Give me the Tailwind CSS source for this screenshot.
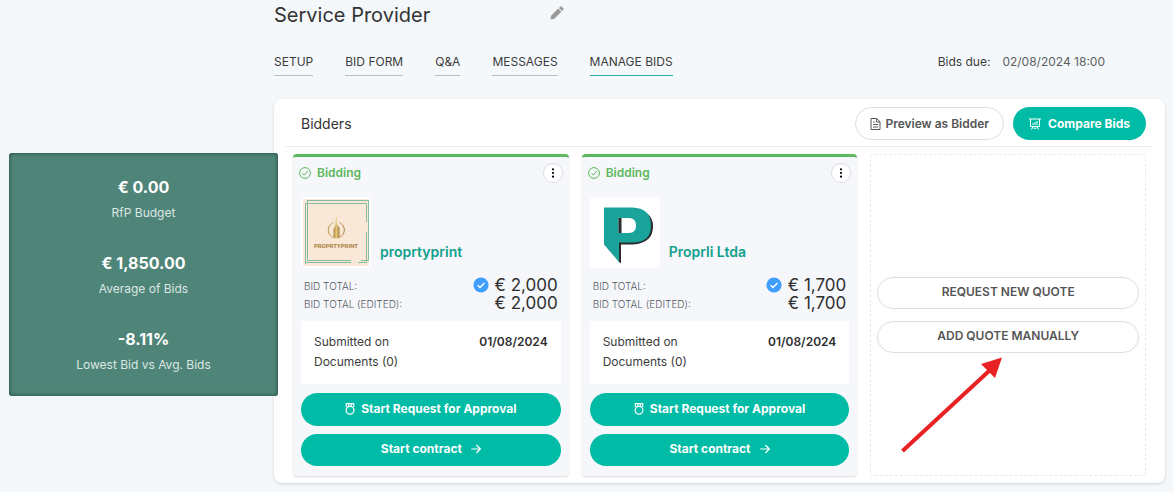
<!DOCTYPE html>
<html lang="en">
<head>
<meta charset="utf-8">
<meta name="viewport" content="width=device-width, initial-scale=1">
<title>Service Provider – Manage Bids</title>
<script src="https://cdn.jsdelivr.net/npm/@tailwindcss/browser@4"></script>
</head>
<body class="min-h-screen bg-[#f4f8fb] font-['Inter',sans-serif] text-[12px] text-[#3c3c3c]">
<svg class="hidden" aria-hidden="true">
  <symbol id="check-outline" viewBox="0 0 12 12"><circle cx="6" cy="6" r="5.4" fill="none" stroke="currentColor"/><path d="M3.4 6.2l1.9 1.8 3.5-3.9" fill="none" stroke="currentColor"/></symbol>
  <symbol id="check-solid" viewBox="0 0 16 16"><circle cx="8" cy="8" r="7.6" fill="#409eff"/><path d="M4.6 8.2l2.4 2.4 4.4-4.6" fill="none" stroke="#fff" stroke-width="1.4"/></symbol>
  <symbol id="dots" viewBox="0 0 4 10"><circle cx="2" cy="1.3" r="1.1"/><circle cx="2" cy="5" r="1.1"/><circle cx="2" cy="8.7" r="1.1"/></symbol>
  <symbol id="medal" viewBox="0 0 10 12"><g fill="none" stroke="currentColor" stroke-width="1.2"><path d="M1.300 3.900V.7h7.400v3.200M3.700.7v2.600M6.300.7v2.600"/><circle cx="5" cy="7.300" r="3.900"/></g></symbol>
  <symbol id="arrow-right" viewBox="0 0 10 10"><path d="M.3 5h9M5.300 1l4 4-4 4" fill="none" stroke="currentColor" stroke-width="1.200"/></symbol>
</svg>

<div class="flex">
  <aside class="relative z-10 w-[278px] shrink-0 pt-[153px] pl-[9px]">
    <dl class="flex flex-col gap-[31px] rounded-[3px] bg-[#4f8578] pt-[23px] pb-[23px] text-center shadow-[inset_0_0_4px_#1e4438]">
      <div class="flex flex-col-reverse gap-[7px]"><dt class="leading-[16px] text-[#dce7e4]">RfP Budget</dt><dd class="text-[16px] leading-[22px] font-bold text-white">€ 0.00</dd></div>
      <div class="flex flex-col-reverse gap-[7px]"><dt class="leading-[16px] text-[#dce7e4]">Average of Bids</dt><dd class="text-[16px] leading-[22px] font-bold text-white">€ 1,850.00</dd></div>
      <div class="flex flex-col-reverse gap-[7px]"><dt class="leading-[16px] text-[#dce7e4]">Lowest Bid vs Avg. Bids</dt><dd class="text-[16px] leading-[22px] font-bold text-white">-8.11%</dd></div>
    </dl>
  </aside>

  <main class="-ml-1 min-w-0 flex-1 pr-2">
    <div class="flex h-[30px] items-center gap-[120px]">
      <h1 class="text-[20px] leading-[30px] text-[#333]">Service Provider</h1>
      <button type="button" aria-label="Edit name" class="mb-1 text-[#9b9b9b]">
        <svg class="size-[14px]" viewBox="0 0 14 14" fill="currentColor"><path d="M.4 13.600l.8-4L8.200 2.600l3.200 3.200-7 7zM9 1.900l1.200-1.200q.8-.7 1.600 0l1.500 1.500q.7.800 0 1.600l-1.200 1.200z"/></svg>
      </button>
    </div>

    <div class="mt-[22px] flex items-start justify-between pr-[60px]">
      <nav class="flex gap-8 leading-[20px]">
        <a href="#" class="border-b border-[#b9bec2] pb-[3px]">SETUP</a>
        <a href="#" class="border-b border-[#b9bec2] pb-[3px]">BID FORM</a>
        <a href="#" class="border-b border-[#b9bec2] pb-[3px]">Q&amp;A</a>
        <a href="#" class="border-b border-[#b9bec2] pb-[3px]">MESSAGES</a>
        <a href="#" aria-current="page" class="border-b border-[#1fb3a2] pb-[3px]">MANAGE BIDS</a>
      </nav>
      <p class="flex gap-3 leading-[20px]"><span>Bids due:</span><time class="text-[#5c5f62]">02/08/2024 18:00</time></p>
    </div>

    <section class="mt-[23px] rounded-[8px] bg-white px-3 pb-[7px] shadow-[0_1px_3px_rgba(0,0,0,0.16)]">
      <header class="flex h-12 items-center justify-between border-b border-[#ebebf3] pt-[2px] pr-[7px] pl-[15px]">
        <h2 class="text-[14px] text-[#333]">Bidders</h2>
        <div class="flex gap-[9px]">
          <button type="button" class="flex h-[33px] items-center gap-1 rounded-full border border-[#dcdce6] px-[14px] font-semibold text-[#555]">
            <svg class="h-3 w-[11px]" viewBox="0 0 11 12" fill="none" stroke="currentColor"><path d="M1 .5h5.800L10 3.700v7.800H1zM6.600.7V4H10M3 4h1.800M3 6.500h5M3 9h5"/></svg>
            Preview as Bidder
          </button>
          <button type="button" class="flex h-[33px] items-center gap-[7px] rounded-full bg-[#00bba5] px-4 font-bold text-white">
            <svg class="size-3" viewBox="0 0 12 12" fill="none" stroke="currentColor"><path d="M0 1h12M1.500 1v7.500h9V1M4 8.500l-1.500 3M8 8.500l1.500 3M4 5v2M6 4v3M8 3v4M4.500 10.200h3"/></svg>
            Compare Bids
          </button>
        </div>
      </header>

      <div class="mt-[7px] grid grid-cols-3 gap-[13px] pr-[7px] pl-[7px]">
        <article class="rounded-[4px] border-t-[3px] border-[#5cb85c] bg-[#f5f7fb] px-2 pb-[10px] shadow-[0_1px_2px_rgba(0,0,0,0.14)]">
          <div class="-mx-[2px] flex h-[32px] items-center justify-between">
            <p class="flex items-center gap-[6px] font-semibold text-[#5cb85c]"><svg class="size-3"><use href="#check-outline"/></svg>Bidding</p>
            <button type="button" aria-label="More options for proprtyprint" class="flex size-5 items-center justify-center rounded-full border border-[#dcdce6] bg-white"><svg class="h-[10px] w-1"><use href="#dots"/></svg></button>
          </div>
          <div class="mt-2 flex items-end gap-[9px]">
            <div class="h-[71px] w-[70px] rounded-[3px] bg-white p-[2px]">
              <svg class="size-full" viewBox="0 0 66 67" role="img" aria-label="proprtyprint logo">
                <defs><linearGradient id="gold" x1="0" x2="1"><stop stop-color="#b58a45"/><stop offset=".5" stop-color="#e2c67b"/><stop offset="1" stop-color="#a47a35"/></linearGradient></defs>
                <path fill="#f9e8d8" d="M0 0h66v67H0z"/>
                <path d="M2.500 65V4.500H63.500V23M63.500 33V63.500H55M48 63.500H2.500M4.500 1V61.500H48M58 61.500H65.500V1.500H4.500" fill="none" stroke="#86bda0"/>
                <path d="M30.500 23.500a8 8 0 1 0 5.600 0" fill="none" stroke="url(#gold)" stroke-width="1"/>
                <path d="M33.200 16l.8 9 2.500 4v9.500q-3 1.500-6 0V30l2-4z" fill="url(#gold)"/>
                <text x="33" y="49" text-anchor="middle" font-family="Liberation Sans Narrow, Roboto, sans-serif" font-size="6" font-weight="bold" fill="#a9803f">PROPRTYPRINT</text>
              </svg>
            </div>
            <h3 class="pb-[6px] text-[14px] leading-[20px] font-semibold text-[#12a08d]">proprtyprint</h3>
          </div>
          <dl class="mt-2 flex flex-col px-[3px]">
            <div class="flex items-center justify-between"><dt class="pt-[3px] text-[10px] leading-[15px] font-light text-[#55585d]">BID TOTAL:</dt><dd class="flex items-center gap-[6px] text-[17px] leading-[18px] text-[#2f2f2f]"><svg class="size-4"><use href="#check-solid"/></svg>€ 2,000</dd></div>
            <div class="flex items-center justify-between"><dt class="pt-[3px] text-[10px] leading-[15px] font-light text-[#55585d]">BID TOTAL (EDITED):</dt><dd class="text-[17px] leading-[18px] text-[#2f2f2f]">€ 2,000</dd></div>
          </dl>
          <dl class="mt-[9px] bg-white px-[13px] pt-[11px] pb-3 leading-[20px]">
            <div class="flex justify-between"><dt>Submitted on</dt><dd class="font-semibold text-[#2f2f2f]">01/08/2024</dd></div>
            <div><dt>Documents (0)</dt></div>
          </dl>
          <button type="button" class="mt-[9px] flex h-[33px] w-full items-center justify-center gap-[6px] rounded-full bg-[#00bba5] pb-[2px] font-bold text-white"><svg class="h-3 w-[10px]"><use href="#medal"/></svg>Start Request for Approval</button>
          <button type="button" class="mt-2 flex h-8 w-full items-center justify-center gap-[9px] rounded-full bg-[#00bba5] pb-[2px] font-bold text-white">Start contract<svg class="size-[10px]"><use href="#arrow-right"/></svg></button>
        </article>

        <article class="rounded-[4px] border-t-[3px] border-[#5cb85c] bg-[#f5f7fb] px-2 pb-[10px] shadow-[0_1px_2px_rgba(0,0,0,0.14)]">
          <div class="-mx-[2px] flex h-[32px] items-center justify-between">
            <p class="flex items-center gap-[6px] font-semibold text-[#5cb85c]"><svg class="size-3"><use href="#check-outline"/></svg>Bidding</p>
            <button type="button" aria-label="More options for Proprli Ltda" class="flex size-5 items-center justify-center rounded-full border border-[#dcdce6] bg-white"><svg class="h-[10px] w-1"><use href="#dots"/></svg></button>
          </div>
          <div class="mt-2 flex items-end gap-[9px]">
            <div class="h-[71px] w-[70px] rounded-[3px] bg-white">
              <svg class="size-full" viewBox="0 0 70 71" role="img" aria-label="Proprli logo">
                <path d="M28 20H31V66.500L28 64zM42 12Q63 13 63 29.500T43 47.500H30V37z" fill="#2b2b2b"/>
                <path d="M14 10.500H42Q61 11 61 28.500T42 45.500H29V65L14 47.500z" fill="#1aa39a"/>
                <path d="M28.500 21H39Q46 21 46 28.500T39 36H28.500z" fill="#fff"/>
                <path d="M28.500 21H31.500V36H28.500z" fill="#2b2b2b"/>
              </svg>
            </div>
            <h3 class="pb-[6px] text-[14px] leading-[20px] font-semibold text-[#12a08d]">Proprli Ltda</h3>
          </div>
          <dl class="mt-2 flex flex-col px-[3px]">
            <div class="flex items-center justify-between"><dt class="pt-[3px] text-[10px] leading-[15px] font-light text-[#55585d]">BID TOTAL:</dt><dd class="flex items-center gap-[6px] text-[17px] leading-[18px] text-[#2f2f2f]"><svg class="size-4"><use href="#check-solid"/></svg>€ 1,700</dd></div>
            <div class="flex items-center justify-between"><dt class="pt-[3px] text-[10px] leading-[15px] font-light text-[#55585d]">BID TOTAL (EDITED):</dt><dd class="text-[17px] leading-[18px] text-[#2f2f2f]">€ 1,700</dd></div>
          </dl>
          <dl class="mt-[9px] bg-white px-[13px] pt-[11px] pb-3 leading-[20px]">
            <div class="flex justify-between"><dt>Submitted on</dt><dd class="font-semibold text-[#2f2f2f]">01/08/2024</dd></div>
            <div><dt>Documents (0)</dt></div>
          </dl>
          <button type="button" class="mt-[9px] flex h-[33px] w-full items-center justify-center gap-[6px] rounded-full bg-[#00bba5] pb-[2px] font-bold text-white"><svg class="h-3 w-[10px]"><use href="#medal"/></svg>Start Request for Approval</button>
          <button type="button" class="mt-2 flex h-8 w-full items-center justify-center gap-[9px] rounded-full bg-[#00bba5] pb-[2px] font-bold text-white">Start contract<svg class="size-[10px]"><use href="#arrow-right"/></svg></button>
        </article>

        <div class="relative flex flex-col justify-center gap-3 rounded-[4px] border border-dashed border-[#e8e8f0] px-[6px]">
          <button type="button" class="h-8 rounded-full border border-[#dcdce6] bg-white pb-[2px] font-semibold text-[#555]">REQUEST NEW QUOTE</button>
          <button type="button" class="h-8 rounded-full border border-[#dcdce6] bg-white pb-[2px] font-semibold text-[#555]">ADD QUOTE MANUALLY</button>
          <svg class="pointer-events-none absolute bottom-[22px] left-[30px] h-[96px] w-[102px]" viewBox="0 0 102 96" aria-hidden="true"><path d="M1.500 94L88 14" stroke="#e82224" stroke-width="4"/><path d="M101 .500L80 7l14 14z" fill="#e82224"/></svg>
        </div>
      </div>
    </section>
  </main>
</div>
</body>
</html>
